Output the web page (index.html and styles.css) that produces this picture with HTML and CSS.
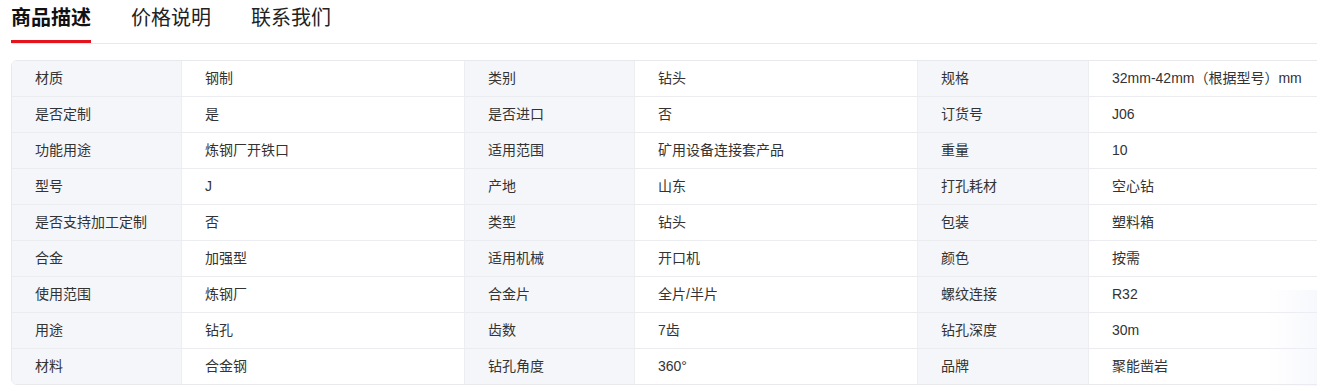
FILE: index.html
```html
<!DOCTYPE html>
<html lang="zh-CN">
<head>
<meta charset="utf-8">
<title>商品描述</title>
<link rel="stylesheet" href="styles.css">
</head>
<body>
<div class="page">
  <div class="tabs">
    <div class="tab active">商品描述</div>
    <div class="tab">价格说明</div>
    <div class="tab">联系我们</div>
  </div>
  <div class="spec">
    <div class="k">材质</div><div class="v">钢制</div><div class="k">类别</div><div class="v">钻头</div><div class="k">规格</div><div class="v">32mm-42mm（根据型号）mm</div>
    <div class="k">是否定制</div><div class="v">是</div><div class="k">是否进口</div><div class="v">否</div><div class="k">订货号</div><div class="v">J06</div>
    <div class="k">功能用途</div><div class="v">炼钢厂开铁口</div><div class="k">适用范围</div><div class="v">矿用设备连接套产品</div><div class="k">重量</div><div class="v">10</div>
    <div class="k">型号</div><div class="v">J</div><div class="k">产地</div><div class="v">山东</div><div class="k">打孔耗材</div><div class="v">空心钻</div>
    <div class="k">是否支持加工定制</div><div class="v">否</div><div class="k">类型</div><div class="v">钻头</div><div class="k">包装</div><div class="v">塑料箱</div>
    <div class="k">合金</div><div class="v">加强型</div><div class="k">适用机械</div><div class="v">开口机</div><div class="k">颜色</div><div class="v">按需</div>
    <div class="k">使用范围</div><div class="v">炼钢厂</div><div class="k">合金片</div><div class="v">全片/半片</div><div class="k">螺纹连接</div><div class="v">R32</div>
    <div class="k">用途</div><div class="v">钻孔</div><div class="k">齿数</div><div class="v">7齿</div><div class="k">钻孔深度</div><div class="v">30m</div>
    <div class="k last">材料</div><div class="v last">合金钢</div><div class="k last">钻孔角度</div><div class="v last">360°</div><div class="k last">品牌</div><div class="v last">聚能凿岩</div>
  </div>
</div>
<div class="edge-fade"></div>
</body>
</html>
```
FILE: styles.css
```css
html, body {
  margin: 0;
  padding: 0;
  overflow: hidden;
  background: #fff;
}
body {
  font-family: "Liberation Sans", "Noto Sans CJK SC", sans-serif;
  color: #333;
  position: relative;
  height: 386px;
}
.page {
  padding-left: 11px;
  width: 1362px;
}
.tabs {
  display: flex;
  gap: 40px;
  border-bottom: 1px solid #e9e9e9;
}
.tab {
  font-family: "Noto Sans CJK SC", sans-serif;
  font-size: 20px;
  line-height: 28px;
  padding-top: 3px;
  padding-bottom: 9px;
  color: #222;
  border-bottom: 3px solid transparent;
}
.tab.active {
  font-weight: 700;
  color: #111;
  border-bottom-color: #e5141c;
}
.spec {
  margin-top: 16px;
  display: grid;
  grid-template-columns: 170px 283px 170px 283px 171px 283px;
  border: 1px solid #e8e9ed;
  border-radius: 6px;
  overflow: hidden;
  font-size: 14px;
}
.spec > div {
  height: 35px;
  line-height: 35px;
  border-bottom: 1px solid #ebecf0;
  border-right: 1px solid #eceef2;
  padding-left: 23px;
  white-space: nowrap;
  color: #333;
}
.spec > .k {
  background: #f5f6fa;
}
.spec > .v {
  background: #fff;
}
.spec > .last {
  border-bottom: none;
}
.edge-fade {
  position: absolute;
  right: 0;
  top: 290px;
  width: 50px;
  height: 96px;
  background: linear-gradient(to right, rgba(238, 240, 250, 0), rgba(238, 240, 250, 0.45));
  pointer-events: none;
}
```
